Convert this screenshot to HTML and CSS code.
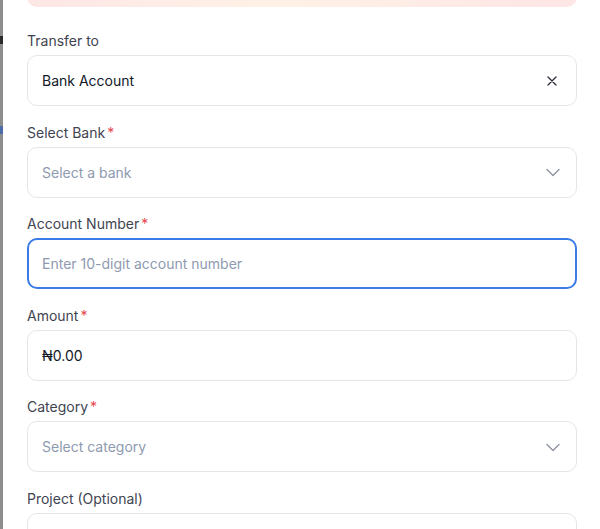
FILE: index.html
```html
<!DOCTYPE html>
<html lang="en">
<head>
  <meta charset="UTF-8" />
  <meta name="viewport" content="width=device-width, initial-scale=1.0"/>
  <title>Send Money</title>
  <link rel="stylesheet" href="styles.css">
</head>
<body>
  <div class="backdrop"></div>
  <div class="modal">
    <div class="notice"></div>

    <form class="transfer-form">
      <div class="field">
        <label>Transfer to</label>
        <div class="control">
          <span class="value">Bank Account</span>
          <!-- clear selection -->
          <svg class="icon clear" width="10" height="10" viewBox="0 0 10 10">
            <path d="M1 1l8 8M9 1l-8 8" stroke="#2a2f3a" stroke-width="1.3" stroke-linecap="round"/>
          </svg>
        </div>
      </div>

      <div class="field">
        <label>Select Bank<span class="req">*</span></label>
        <div class="control">
          <span class="placeholder">Select a bank</span>
          <svg class="icon chevron" width="16" height="16" viewBox="0 0 16 16">
            <path d="M2 5.5l6 6 6-6" fill="none" stroke="#8b93a1" stroke-width="1.3" stroke-linecap="round" stroke-linejoin="round"/>
          </svg>
        </div>
      </div>

      <div class="field">
        <label>Account Number<span class="req">*</span></label>
        <div class="control focused">
          <span class="placeholder">Enter 10-digit account number</span>
        </div>
      </div>

      <div class="field">
        <label>Amount<span class="req">*</span></label>
        <div class="control">
          <span class="value">₦0.00</span>
        </div>
      </div>

      <div class="field">
        <label>Category<span class="req">*</span></label>
        <div class="control">
          <span class="placeholder">Select category</span>
          <svg class="icon chevron" width="16" height="16" viewBox="0 0 16 16">
            <path d="M2 5.5l6 6 6-6" fill="none" stroke="#8b93a1" stroke-width="1.3" stroke-linecap="round" stroke-linejoin="round"/>
          </svg>
        </div>
      </div>

      <div class="field">
        <label>Project (Optional)</label>
        <div class="control"></div>
      </div>
    </form>
  </div>
</body>
</html>
```

FILE: styles.css
```css
* {
  box-sizing: border-box;
}

body {
  margin: 0;
  height: 529px;
  overflow: hidden;
  display: flex;
  font-family: Inter, 'Noto Sans', sans-serif;
  background-color: #ffffff;
}

.backdrop {
  width: 3px;
  flex-shrink: 0;
  background: linear-gradient(180deg, #8d8d8d 0, #8d8d8d 36px, #2b2b2b 36px, #2b2b2b 44px, #8d8d8d 44px, #8d8d8d 126px, #4a6fa8 126px, #4a6fa8 134px, #8d8d8d 134px);
}

.modal {
  width: 598px;
  flex-shrink: 0;
  padding: 0 24px;
  background-color: #ffffff;
}

.notice {
  height: 40px;
  margin-top: -33px;
  border-radius: 10px;
  background: linear-gradient(90deg, #fde7e6 0%, #fff1e6 45%, #fee6e6 100%);
}

.transfer-form {
  display: flex;
  flex-direction: column;
  gap: 16.6px;
  margin-top: 24px;
}

.field label {
  display: block;
  font-size: 14px;
  line-height: 20px;
  color: #3f4451;
  margin-bottom: 4px;
}

.req {
  color: #e5484d;
  margin-left: 2px;
}

.control {
  height: 51px;
  display: flex;
  align-items: center;
  justify-content: space-between;
  padding: 0 14px;
  border: 1px solid #e4e6eb;
  border-radius: 10px;
  font-size: 14px;
}

.control.focused {
  border: 2px solid #3b7be8;
  padding: 0 13px;
}

.value {
  color: #111827;
}

.placeholder {
  color: #8e9ab0;
}

.icon {
  flex-shrink: 0;
}

.clear {
  margin-right: 5px;
}

.chevron {
  margin-right: 1px;
}
```
